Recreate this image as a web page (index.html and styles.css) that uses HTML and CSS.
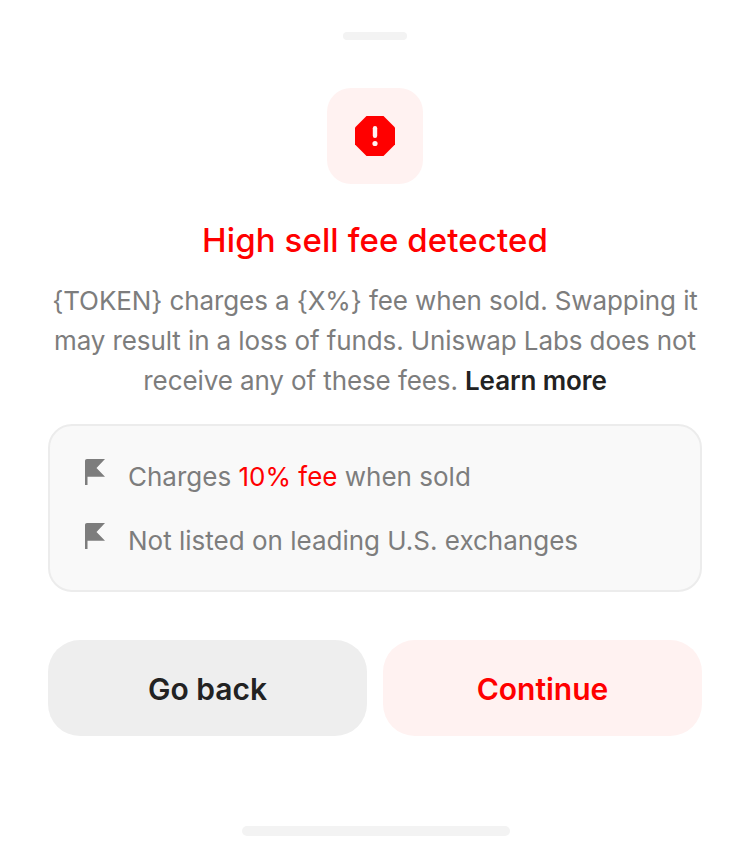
FILE: index.html
```html
<!DOCTYPE html>
<html lang="en">
<head>
  <meta charset="UTF-8">
  <title>High sell fee detected</title>
  <link rel="stylesheet" href="styles.css">
</head>
<body>
  <div class="sheet">
    <div class="handle"></div>

    <div class="icon-box">
      <svg width="40" height="40" viewBox="0 0 40 40">
        <path class="octagon" d="M11.5 0H28.5L40 11.5V28.5L28.5 40H11.5L0 28.5V11.5Z"/>
        <rect class="mark" x="17.8" y="10" width="4.4" height="12" rx="2.2"/>
        <circle class="mark" cx="20" cy="27.5" r="2.6"/>
      </svg>
    </div>

    <h2 class="title">High sell fee detected</h2>
    <p class="desc">{TOKEN} charges a {X%} fee when sold. Swapping it may result in a loss of funds. Uniswap Labs does not receive any of these fees. <a class="learn" href="#">Learn more</a></p>

    <div class="flags">
      <div class="flag-row">
        <svg class="flag" width="20" height="26" viewBox="0 0 20 26"><path d="M0 2C0 .8 .8 0 2 0H20L11.5 9 20 17.7H2.5V26H0Z"/></svg>
        <span>Charges <span class="fee">10% fee</span> when sold</span>
      </div>
      <div class="flag-row">
        <svg class="flag" width="20" height="26" viewBox="0 0 20 26"><path d="M0 2C0 .8 .8 0 2 0H20L11.5 9 20 17.7H2.5V26H0Z"/></svg>
        <span>Not listed on leading U.S. exchanges</span>
      </div>
    </div>

    <div class="button-row">
      <button type="button" class="btn back">Go back</button>
      <button type="button" class="btn continue">Continue</button>
    </div>

    <div class="home-bar"></div>
  </div>
</body>
</html>
```

FILE: styles.css
```css
* {
  box-sizing: border-box;
}

body {
  margin: 0;
  background: white;
  font-family: Inter, "Liberation Sans", sans-serif;
}

.sheet {
  height: 852px;
  padding: 32px 48px 0;
  display: flex;
  flex-direction: column;
  align-items: center;
}

.handle {
  width: 64px;
  height: 8px;
  border-radius: 4px;
  background-color: #f3f3f3;
}

.icon-box {
  width: 96px;
  height: 96px;
  margin-top: 48px;
  border-radius: 24px;
  background-color: #fff2f1;
  display: flex;
  align-items: center;
  justify-content: center;
}

.octagon {
  fill: #ff0000;
}

.mark {
  fill: #fff2f1;
}

.title {
  margin: 36px 0 0;
  font-size: 33px;
  line-height: 41px;
  font-weight: 500;
  letter-spacing: 0.1px;
  color: #ff0000;
}

.desc {
  margin: 20px 0 0;
  width: 100%;
  text-align: center;
  font-size: 26px;
  line-height: 40px;
  letter-spacing: -0.1px;
  color: #7d7d7d;
}

.learn {
  color: #222222;
  font-weight: 600;
  text-decoration: none;
}

.flags {
  width: 100%;
  height: 168px;
  margin-top: 23px;
  padding: 31px 35px;
  border: 2px solid #ececec;
  border-radius: 24px;
  background-color: #f9f9f9;
  display: flex;
  flex-direction: column;
  gap: 24px;
  font-size: 26px;
  line-height: 40px;
  color: #7d7d7d;
}

.flag-row {
  display: flex;
  align-items: center;
  gap: 23px;
}

.flag {
  fill: #7d7d7d;
  flex-shrink: 0;
  margin-top: -10px;
}

.fee {
  color: #ff0000;
}

.button-row {
  width: 100%;
  margin-top: 48px;
  display: flex;
  gap: 16px;
}

.btn {
  flex: 1;
  height: 96px;
  padding: 2px 0 0;
  border: none;
  border-radius: 32px;
  font-family: inherit;
  font-size: 30px;
  font-weight: 600;
}

.back {
  background-color: #eeeeee;
  color: #222222;
}

.continue {
  background-color: #fff2f1;
  color: #ff0000;
}

.home-bar {
  width: 268px;
  height: 10px;
  margin-top: 90px;
  margin-left: 1px;
  border-radius: 5px;
  background-color: #f3f3f3;
}
```
